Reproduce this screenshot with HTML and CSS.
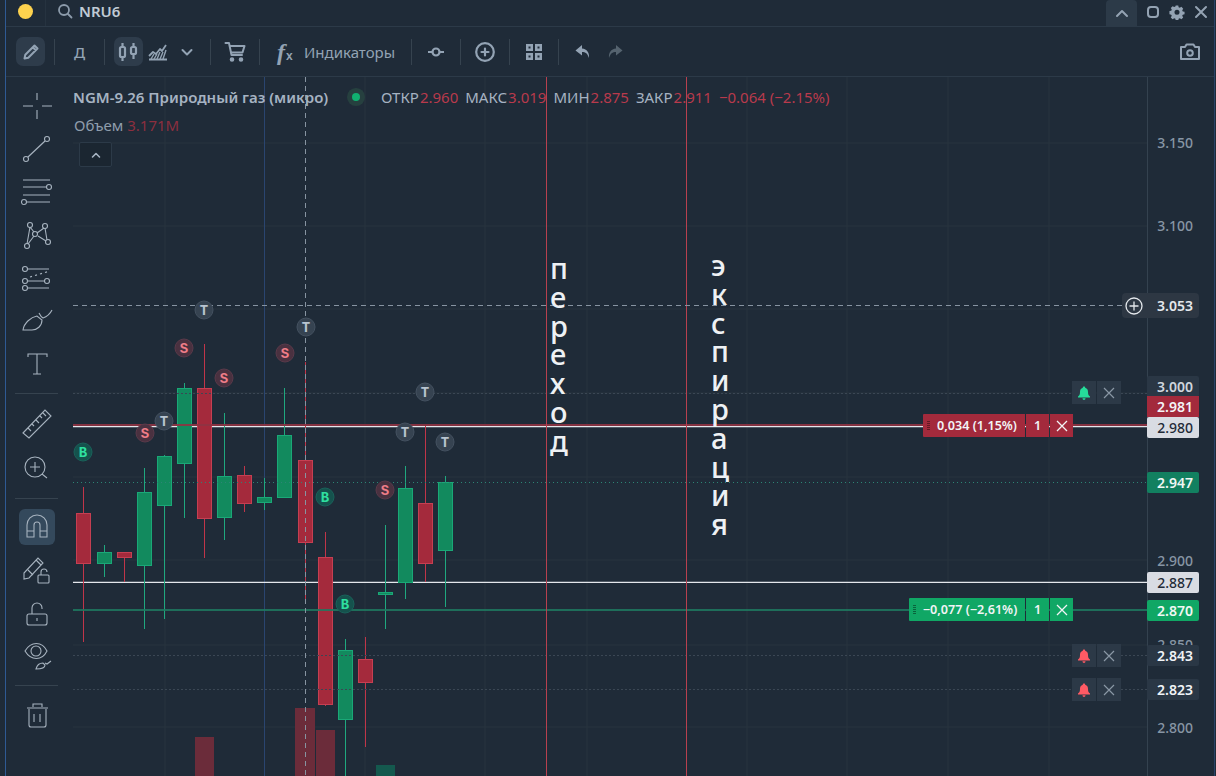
FILE: index.html
```html
<!DOCTYPE html>
<html>
<head>
  <meta charset="utf-8">
  <link rel="stylesheet" href="styles.css">
</head>
<body>
  <div class="window">
    <!-- ticker bar -->
    <div class="topbar">
      <span class="status-dot"></span>
      <span class="topbar-sep"></span>
      <svg class="search-icon" width="16" height="16" viewBox="0 0 16 16" fill="none" stroke="currentColor" stroke-width="1.8" stroke-linecap="round">
        <circle cx="7" cy="7" r="5"/><path d="M11 11l3.5 3.5"/>
      </svg>
      <span class="ticker">NRU6</span>
      <div class="window-actions">
        <button class="collapse-button">
          <svg width="16" height="16" viewBox="0 0 16 16" fill="none" stroke="currentColor" stroke-width="2" stroke-linecap="round" stroke-linejoin="round"><path d="M3 11l5-5 5 5"/></svg>
        </button>
        <svg class="win-icon" width="14" height="14" viewBox="0 0 14 14" fill="none" stroke="currentColor" stroke-width="2"><rect x="2" y="2" width="10" height="10" rx="3"/></svg>
        <svg class="win-icon" width="16" height="16" viewBox="0 0 16 16" fill="currentColor"><path fill-rule="evenodd" d="M6.6 1h2.8l.4 2 1.3.6 1.8-1.1 2 2-1.1 1.8.6 1.3 2 .4v2.8l-2 .4-.6 1.3 1.1 1.8-2 2-1.8-1.1-1.3.6-.4 2H6.6l-.4-2-1.3-.6-1.8 1.1-2-2 1.1-1.8-.6-1.3-2-.4V7.2l2-.4.6-1.3-1.1-1.8 2-2 1.8 1.1 1.3-.6zM8 5.6a2.8 2.8 0 1 0 0 5.600 2.8 2.8 0 0 0 0-5.600z" transform="translate(.8 .6) scale(.9)"/></svg>
        <svg class="win-icon" width="14" height="14" viewBox="0 0 14 14" fill="none" stroke="currentColor" stroke-width="2" stroke-linecap="round"><path d="M2 2l10 10M12 2L2 12"/></svg>
      </div>
    </div>

    <!-- main toolbar -->
    <div class="toolbar">
      <button class="tool active">
        <svg width="20" height="20" viewBox="0 0 20 20" fill="none" stroke="currentColor" stroke-width="2" stroke-linejoin="round"><path d="M3.5 16.500l.8-3.800L13.500 3.500l3 3-9.200 9.200zM11.800 5.200l3 3"/></svg>
      </button>
      <span class="sep"></span>
      <button class="tool day">Д</button>
      <span class="sep"></span>
      <button class="tool active">
        <svg width="24" height="20" viewBox="0 0 24 20" fill="none" stroke="currentColor" stroke-width="2.2"><rect x="3" y="5" width="5" height="10" rx="1.500"/><path d="M5.500 1v4M5.500 15v4"/><rect x="14" y="5" width="5" height="7" rx="1.500"/><path d="M16.500 1v4M16.500 12v5"/></svg>
      </button>
      <button class="tool">
        <svg width="20" height="20" viewBox="0 0 20 20" fill="none" stroke="currentColor" stroke-width="1.8" stroke-linejoin="round"><path d="M1 14l4-4 3 2 4-5 2 2 4-6M1 17.500h18"/><path d="M3 17l3-5M6 17l3-5M9 17l3-7M12 17l3-7M15 17l3-9" stroke-width="1.4"/></svg>
      </button>
      <button class="tool narrow">
        <svg width="14" height="14" viewBox="0 0 14 14" fill="none" stroke="currentColor" stroke-width="2" stroke-linecap="round" stroke-linejoin="round"><path d="M2.500 5L7 9.500 11.500 5"/></svg>
      </button>
      <span class="sep"></span>
      <button class="tool">
        <svg width="22" height="22" viewBox="0 0 22 22" fill="none" stroke="currentColor" stroke-width="2" stroke-linejoin="round" stroke-linecap="round"><path d="M1.500 2H5l2.500 12H18"/><path d="M6 5h14.500l-2 6.500H7.500"/><circle cx="8" cy="18.500" r="1.300" fill="currentColor"/><circle cx="17" cy="18.500" r="1.300" fill="currentColor"/></svg>
      </button>
      <span class="sep"></span>
      <button class="tool indicators">
        <span class="fx"><i>f</i><b>x</b></span>
        Индикаторы
      </button>
      <span class="sep"></span>
      <button class="tool">
        <svg width="20" height="20" viewBox="0 0 20 20" fill="none" stroke="currentColor" stroke-width="2.2"><circle cx="10" cy="10" r="3.500"/><path d="M2 10h4.500M13.500 10H18"/></svg>
      </button>
      <span class="sep"></span>
      <button class="tool">
        <svg width="22" height="22" viewBox="0 0 22 22" fill="none" stroke="currentColor" stroke-width="2.2" stroke-linecap="round"><circle cx="11" cy="11" r="8.800"/><path d="M11 7.500v7M7.500 11h7"/></svg>
      </button>
      <span class="sep"></span>
      <button class="tool">
        <svg width="20" height="20" viewBox="0 0 20 20" fill="currentColor"><path fill-rule="evenodd" d="M2 2h7v7H2zM4.500 4.500v2h2v-2zM11 2h7v7h-7zM13.500 4.500v2h2v-2zM2 11h7v7H2zM4.500 13.500v2h2v-2zM11 11h7v7h-7zM13.500 13.500v2h2v-2z"/></svg>
      </button>
      <span class="sep"></span>
      <button class="tool">
        <svg width="18" height="18" viewBox="0 0 18 18" fill="currentColor"><path d="M8 2L1.500 7.500 8 12.500V9c3.500 0 5.500 1.500 7 6 .5-5.500-2-9-7-9.500z"/></svg>
      </button>
      <button class="tool dim">
        <svg width="18" height="18" viewBox="0 0 18 18" fill="currentColor"><path d="M10 2l6.500 5.500L10 12.500V9c-3.500 0-5.500 1.500-7 6-.5-5.500 2-9 7-9.500z"/></svg>
      </button>
      <button class="tool camera">
        <svg width="22" height="20" viewBox="0 0 22 20" fill="none" stroke="currentColor" stroke-width="2" stroke-linejoin="round"><path d="M2 5h4l1.500-2.500h7L16 5h4v12H2z"/><circle cx="11" cy="11" r="2.800"/></svg>
      </button>
    </div>

    <div class="workspace">
      <!-- drawing tools -->
      <div class="rail">
        <button class="rail-tool">
          <svg viewBox="0 0 32 32"><path d="M16 3v7M16 20v9M2 16h10M21 16h10"/></svg>
        </button>
        <button class="rail-tool">
          <svg viewBox="0 0 32 32"><circle cx="26" cy="6" r="2.500"/><circle cx="5" cy="26" r="2.500"/><path d="M7 24L24 8"/></svg>
        </button>
        <button class="rail-tool">
          <svg viewBox="0 0 32 32"><path d="M2 4h27M2 11h23M2 19h27M6 26h23"/><circle cx="28" cy="11" r="2.500"/><circle cx="3" cy="26" r="2.500"/></svg>
        </button>
        <button class="rail-tool">
          <svg viewBox="0 0 32 32"><path d="M9 8l4 5M9 8L6 25M13 17L7 25M16 14l7-5M17 17l8 5M24 9l2 12"/><circle cx="9" cy="6" r="2.500"/><circle cx="24" cy="7" r="2.500"/><circle cx="14" cy="15" r="2.500"/><circle cx="6" cy="27" r="2.500"/><circle cx="27" cy="23" r="2.500"/></svg>
        </button>
        <button class="rail-tool">
          <svg viewBox="0 0 32 32"><path d="M7 7h21M7 19h17M7 26h21"/><path d="M9 15l2-.6M14 13.500l2-.6M19 12l2-.6M24 10.500l2-.6"/><circle cx="4" cy="7" r="2.500"/><circle cx="4" cy="19" r="2.500"/><circle cx="26" cy="19" r="2.500"/><circle cx="4" cy="26" r="2.500"/></svg>
        </button>
        <button class="rail-tool">
          <svg viewBox="0 0 32 32"><path d="M2 25C3 18 10 12 16 11l5 4c0 6-5 10-10 10zM18 8c1 2 2 4 4 5 3-1 7-4 9-8"/></svg>
        </button>
        <button class="rail-tool">
          <svg viewBox="0 0 32 32"><path d="M7 9V6h19v3M16 6v20M12 26h8"/></svg>
        </button>
        <span class="rail-sep"></span>
        <button class="rail-tool">
          <svg viewBox="0 0 32 32"><path d="M2 25L24 2l6 6L8 30zM7 20l3 3M11 16l2 2M15 12l3 3M19 8l2 2M22 5l3 3"/></svg>
        </button>
        <button class="rail-tool">
          <svg viewBox="0 0 32 32"><circle cx="14" cy="16" r="10"/><path d="M14 11v10M9 16h10M21 23l5 4"/></svg>
        </button>
        <span class="rail-sep low"></span>
        <button class="rail-tool active">
          <svg viewBox="0 0 32 32"><path d="M6 26V14a10 10 0 0 1 20 0v12h-7V14a3 3 0 0 0-6 0v12zM6 20h7M19 20h7"/></svg>
        </button>
        <button class="rail-tool">
          <svg viewBox="0 0 32 32"><path d="M3 19L17 4l5 5L8 24l-5 1zM7 16l5 5M15 6l5 5"/><rect x="17" y="21" width="11" height="8" rx="1"/><path d="M20 21v-3a3 3 0 0 1 6 0"/></svg>
        </button>
        <button class="rail-tool">
          <svg viewBox="0 0 32 32"><rect x="6" y="17" width="20" height="11" rx="2"/><path d="M11 17v-6a5 5 0 0 1 10 0v1M16 21v3"/></svg>
        </button>
        <button class="rail-tool">
          <svg viewBox="0 0 32 32"><path d="M4 11c6-10 17-10 22 0-5 10-16 10-22 0z"/><circle cx="15" cy="11" r="5"/><path d="M15 29c1-4 4-6 7-6l2 2c0 3-4 4-9 4zM24 23l2 1 4-3"/></svg>
        </button>
        <span class="rail-sep"></span>
        <button class="rail-tool">
          <svg viewBox="0 0 32 32"><path d="M6 8h21M12 7V4h9v3M8 9v16a2 2 0 0 0 2 2h13a2 2 0 0 0 2-2V9M13 14v8M19 14v8"/></svg>
        </button>
      </div>

      <!-- chart canvas, svg coordinates are page coordinates -->
      <div class="chart">
        <svg class="plot" width="1141" height="699" viewBox="73 77 1141 699">
          <g class="grid">
            <path d="M165 77v699M365 77v699M485 77v699M587 77v699M747 77v699M847 77v699M948 77v699M1049 77v699"/>
            <path d="M73 143h1074M73 226h1074M73 309h1074M73 393h1074M73 477h1074M73 560h1074M73 645h1074M73 727h1074"/>
          </g>
          <path class="session" d="M264.5 77v699"/>
          <path class="axis-line" d="M1147.5 77v699"/>

          <path class="level-white" d="M73 426.7h1074M73 582.4h1074"/>

          <g class="vol-red">
            <rect x="195" y="737" width="19" height="39"/>
            <rect x="295" y="708" width="20" height="68"/>
            <rect x="316" y="730" width="19" height="46"/>
          </g>
          <rect class="vol-green" x="376" y="765" width="19" height="11"/>

          <g class="wick-red">
            <path d="M83.5 487v155M124.5 558v24M204.5 344v214M244.5 466v46M305.5 362v240M325.5 532v174M365.5 637v110M425.5 426v156"/>
          </g>
          <g class="wick-green">
            <path d="M104.5 545v32M144.5 468v161M164.5 455v164M184.5 383v135M224.5 413v127M264.5 478v32M284.5 388v47M345.5 639v137M385.5 525v104M405.5 466v133M445.5 476v131"/>
          </g>
          <g class="body-red">
            <rect x="76.5" y="513.5" width="14" height="50"/>
            <rect x="117.5" y="552.5" width="14" height="5"/>
            <rect x="197.5" y="388.5" width="14" height="130"/>
            <rect x="237.5" y="475.5" width="14" height="28"/>
            <rect x="298.5" y="460.5" width="14" height="82"/>
            <rect x="318.5" y="557.5" width="14" height="147"/>
            <rect x="358.5" y="659.5" width="14" height="23"/>
            <rect x="418.5" y="503.5" width="14" height="60"/>
          </g>
          <g class="body-green">
            <rect x="97.5" y="552.5" width="14" height="11"/>
            <rect x="137.5" y="492.5" width="14" height="73"/>
            <rect x="157.5" y="456.5" width="14" height="49"/>
            <rect x="177.5" y="388.5" width="14" height="75"/>
            <rect x="217.5" y="476.5" width="14" height="41"/>
            <rect x="257.5" y="497.5" width="14" height="5"/>
            <rect x="277.5" y="435.5" width="14" height="62"/>
            <rect x="338.5" y="650.5" width="14" height="69"/>
            <rect x="378.5" y="592.5" width="14" height="2"/>
            <rect x="398.5" y="488.5" width="14" height="94"/>
            <rect x="438.5" y="482.5" width="14" height="68"/>
          </g>

          <path class="level-red" d="M73 425h1074"/>
          <path class="level-green" d="M73 610h1074"/>
          <path class="dots-gray" d="M73 393.5h1074M73 655.5h1074M73 689.5h1074"/>
          <path class="dots-teal" d="M73 482.5h1074"/>

          <path class="vline-red" d="M546.5 77v699M686.5 77v699"/>
          <path class="cross" d="M73 305.5h1052M305.5 77v699"/>

          <g class="mark mark-t">
            <circle cx="204" cy="310" r="9"/><text x="204" y="314.5">T</text>
            <circle cx="306" cy="327" r="9"/><text x="306" y="331.5">T</text>
            <circle cx="164" cy="421" r="9"/><text x="164" y="425.5">T</text>
            <circle cx="425" cy="392" r="9"/><text x="425" y="396.5">T</text>
            <circle cx="405" cy="432" r="9"/><text x="405" y="436.5">T</text>
            <circle cx="445" cy="442" r="9"/><text x="445" y="446.5">T</text>
          </g>
          <g class="mark mark-s">
            <circle cx="184" cy="348" r="9"/><text x="184" y="352.5">S</text>
            <circle cx="285" cy="353" r="9"/><text x="285" y="357.5">S</text>
            <circle cx="224" cy="378" r="9"/><text x="224" y="382.5">S</text>
            <circle cx="145" cy="433" r="9"/><text x="145" y="437.5">S</text>
            <circle cx="385" cy="490" r="9"/><text x="385" y="494.5">S</text>
          </g>
          <g class="mark mark-b">
            <circle cx="83" cy="452" r="9"/><text x="83" y="456.5">B</text>
            <circle cx="325" cy="497" r="9"/><text x="325" y="501.5">B</text>
            <circle cx="345" cy="604" r="9"/><text x="345" y="608.5">B</text>
          </g>
        </svg>

        <!-- legend -->
        <div class="legend">
          <span class="legend-title">NGM-9.26 Природный газ (микро)</span>
          <span class="legend-dot"></span>
          <span class="ohlc"><em>ОТКР</em><b>2.960</b></span>
          <span class="ohlc"><em>МАКС</em><b>3.019</b></span>
          <span class="ohlc"><em>МИН</em><b>2.875</b></span>
          <span class="ohlc"><em>ЗАКР</em><b>2.911</b></span>
          <span class="ohlc"><b>−0.064 (−2.15%)</b></span>
        </div>
        <div class="volume">Объем <b>3.171M</b></div>
        <button class="legend-toggle">
          <svg width="12" height="12" viewBox="0 0 12 12" fill="none" stroke="currentColor" stroke-width="1.6" stroke-linecap="round" stroke-linejoin="round"><path d="M2.5 8L6 4.5 9.5 8"/></svg>
        </button>

        <div class="note note-a">переход</div>
        <div class="note note-b">экспирация</div>

        <!-- price scale -->
        <span class="price" style="top:55px">3.150</span>
        <span class="price" style="top:138px">3.100</span>
        <span class="price" style="top:473px">2.900</span>
        <span class="price" style="top:557px">2.850</span>
        <span class="price" style="top:640px">2.800</span>
        <span class="price tag tag-dark" style="top:299px">3.000</span>
        <span class="price tag tag-red" style="top:319px">2.981</span>
        <span class="price tag tag-light" style="top:340px">2.980</span>
        <span class="price tag tag-deep" style="top:395px">2.947</span>
        <span class="price tag tag-light" style="top:495px">2.887</span>
        <span class="price tag tag-green" style="top:523px">2.870</span>
        <span class="price tag tag-dark bright" style="top:568px">2.843</span>
        <span class="price tag tag-dark bright" style="top:602px">2.823</span>

        <div class="cursor-price">
          <svg width="18" height="18" viewBox="0 0 18 18" fill="none" stroke="currentColor" stroke-width="1.3"><circle cx="9" cy="9" r="8"/><path d="M9 4.5v9M4.5 9h9"/></svg>
          <span>3.053</span>
        </div>

        <!-- positions -->
        <div class="order order-red" style="top:337px">
          <span class="order-pnl"><i class="grip"></i>0,034 (1,15%)</span>
          <span class="order-qty">1</span>
          <span class="order-close"><svg width="12" height="12" viewBox="0 0 12 12" fill="none" stroke="currentColor" stroke-width="1.3"><path d="M1 1l10 10M11 1L1 11"/></svg></span>
        </div>
        <div class="order order-green" style="top:521px">
          <span class="order-pnl"><i class="grip"></i>−0,077 (−2,61%)</span>
          <span class="order-qty">1</span>
          <span class="order-close"><svg width="12" height="12" viewBox="0 0 12 12" fill="none" stroke="currentColor" stroke-width="1.3"><path d="M1 1l10 10M11 1L1 11"/></svg></span>
        </div>

        <!-- alerts -->
        <div class="alert alert-up" style="top:304px">
          <span class="alert-bell"><svg width="14" height="14" viewBox="0 0 14 14" fill="currentColor"><path d="M7 .5c.8 0 1.200.5 1.200 1.200C10.200 2.300 11 4 11 6c0 2.500.7 3.700 2 4.500v1H1v-1C2.300 9.700 3 8.500 3 6c0-2 .8-3.700 2.800-4.300C5.800 1 6.200.5 7 .5zM5.500 12.300h3C8.500 13.300 7.800 14 7 14s-1.500-.7-1.500-1.700z"/></svg></span>
          <span class="alert-close"><svg width="12" height="12" viewBox="0 0 12 12" fill="none" stroke="currentColor" stroke-width="1.2"><path d="M1 1l10 10M11 1L1 11"/></svg></span>
        </div>
        <div class="alert alert-down" style="top:567px">
          <span class="alert-bell"><svg width="14" height="14" viewBox="0 0 14 14" fill="currentColor"><path d="M7 .5c.8 0 1.200.5 1.200 1.200C10.200 2.300 11 4 11 6c0 2.500.7 3.700 2 4.500v1H1v-1C2.300 9.700 3 8.500 3 6c0-2 .8-3.700 2.800-4.300C5.800 1 6.200.5 7 .5zM5.500 12.300h3C8.500 13.300 7.800 14 7 14s-1.500-.7-1.500-1.700z"/></svg></span>
          <span class="alert-close"><svg width="12" height="12" viewBox="0 0 12 12" fill="none" stroke="currentColor" stroke-width="1.2"><path d="M1 1l10 10M11 1L1 11"/></svg></span>
        </div>
        <div class="alert alert-down" style="top:601px">
          <span class="alert-bell"><svg width="14" height="14" viewBox="0 0 14 14" fill="currentColor"><path d="M7 .5c.8 0 1.200.5 1.200 1.200C10.200 2.300 11 4 11 6c0 2.500.7 3.700 2 4.500v1H1v-1C2.300 9.700 3 8.500 3 6c0-2 .8-3.700 2.800-4.300C5.800 1 6.200.5 7 .5zM5.500 12.300h3C8.500 13.300 7.800 14 7 14s-1.500-.7-1.500-1.700z"/></svg></span>
          <span class="alert-close"><svg width="12" height="12" viewBox="0 0 12 12" fill="none" stroke="currentColor" stroke-width="1.2"><path d="M1 1l10 10M11 1L1 11"/></svg></span>
        </div>
      </div>
    </div>
  </div>
</body>
</html>
```

FILE: styles.css
```css
* {
  box-sizing: border-box;
}

html, body {
  height: 100%;
}

body {
  margin: 0;
  overflow: hidden;
  background: #1f2b38;
  color: #a3b1c0;
  font-family: "Noto Sans", "Open Sans", sans-serif;
  font-size: 15px;
}

button {
  font: inherit;
  color: inherit;
  background: none;
  border: none;
  padding: 0;
}

.window {
  margin-left: 5px;
  width: 1210px;
  height: 776px;
  border-left: 1px solid #2f5a94;
  border-right: 1px solid #2a4468;
  display: flex;
  flex-direction: column;
}

/* ticker bar */
.topbar {
  height: 27px;
  flex: none;
  display: flex;
  align-items: flex-start;
  padding-left: 12px;
  border-bottom: 1px solid #2c3a48;
}

.status-dot {
  width: 15px;
  height: 15px;
  margin-top: 4px;
  border-radius: 50%;
  background: #fdd24e;
}

.topbar-sep {
  width: 1px;
  height: 26px;
  margin: 0 11px 0 12px;
  background: #263340;
}

.search-icon {
  margin-top: 3px;
  color: #8c9bab;
}

.ticker {
  margin-left: 6px;
  line-height: 22px;
  font-weight: 600;
  color: #c0cad5;
}

.window-actions {
  margin-left: auto;
  display: flex;
  align-items: center;
  height: 24px;
  color: #94a3b3;
}

.collapse-button {
  width: 31px;
  height: 26px;
  margin-right: 9px;
  align-self: flex-start;
  background: #2c3a48;
  border-radius: 4px 4px 0 0;
  display: flex;
  align-items: center;
  justify-content: center;
}

.win-icon {
  margin-right: 9px;
}

.win-icon:last-child {
  margin-right: 6px;
}

/* toolbar */
.toolbar {
  height: 50px;
  flex: none;
  display: flex;
  align-items: center;
  padding-left: 10px;
  border-bottom: 1px solid #2c3a48;
  color: #93a3b4;
}

.tool {
  width: 30px;
  height: 29px;
  flex: none;
  display: flex;
  align-items: center;
  justify-content: center;
  border-radius: 7px;
}

.tool.active {
  width: 29px;
  background: #2e3c4b;
}

.tool.narrow {
  width: 28px;
}

.tool.day {
  width: 31px;
  font-weight: 500;
}

.tool.dim {
  width: 34px;
  color: #55636f;
}

.tool.indicators {
  width: 133px;
  gap: 7px;
  justify-content: flex-start;
  padding-left: 8px;
}

.fx {
  width: 20px;
  display: inline-flex;
  align-items: baseline;
  font-family: "Liberation Serif", serif;
  font-size: 24px;
  line-height: 1;
}

.fx i {
  font-weight: 700;
}

.fx b {
  font-family: "Liberation Sans", sans-serif;
  font-size: 12px;
  margin-left: 1px;
}

.tool.camera {
  margin-left: auto;
  margin-right: 9px;
}

.sep {
  width: 1px;
  height: 26px;
  margin: 0 9px;
  flex: none;
  background: #36434f;
}

/* layout below toolbar */
.workspace {
  flex: 1;
  display: flex;
  min-height: 0;
}

.rail {
  width: 67px;
  flex: none;
  display: flex;
  flex-direction: column;
  align-items: center;
  padding: 11px 6px 0 0;
}

.rail-tool {
  width: 36px;
  height: 36px;
  flex: none;
  margin-bottom: 7px;
  display: flex;
  align-items: center;
  justify-content: center;
  border-radius: 6px;
}

.rail-tool svg {
  width: 32px;
  height: 32px;
  fill: none;
  stroke: #a7b3bf;
  stroke-width: 1.1;
}

.rail-tool.active {
  background: #34495c;
}

.rail-sep {
  width: 43px;
  height: 1px;
  flex: none;
  margin: 4px 0 12px;
  background: #36434f;
}

.rail-sep.low {
  margin: 6px 0 10px;
}

/* chart */
.chart {
  position: relative;
  flex: 1;
  overflow: hidden;
}

.plot {
  position: absolute;
  left: 0;
  top: 0;
}

.plot path {
  fill: none;
}

.grid path {
  stroke: #28343f;
}

.session {
  stroke: #2a4570;
}

.axis-line {
  stroke: #34424f;
}

.level-white {
  stroke: #e4e7ec;
  stroke-width: 1.3;
}

.level-red {
  stroke: #8f3343;
  stroke-width: 2;
  stroke-opacity: .9;
}

.level-green {
  stroke: #1f7a60;
  stroke-width: 2;
  stroke-opacity: .85;
}

.vline-red {
  stroke: #b8404f;
}

.cross {
  stroke: #8794a1;
  stroke-dasharray: 5 4;
}

.dots-gray {
  stroke: #3b4754;
  stroke-dasharray: 2 2;
}

.dots-teal {
  stroke: #2c8575;
  stroke-dasharray: 1 3;
}

.vol-red rect {
  fill: #6b2c3a;
}

.vol-green {
  fill: #14594e;
}

.wick-red path {
  stroke: #c03549;
}

.wick-green path {
  stroke: #1fa87f;
}

.body-red rect {
  fill: #a42a3c;
  stroke: #c53f52;
}

.body-green rect {
  fill: #128a5e;
  stroke: #1aa877;
}

.mark text {
  font-family: "Liberation Mono", monospace;
  font-size: 14px;
  font-weight: 700;
  text-anchor: middle;
}

.mark-t circle {
  fill: #364351;
  stroke: #445160;
}

.mark-t text {
  fill: #b8c4d0;
}

.mark-s circle {
  fill: #4a3140;
  stroke: #5a3a4a;
}

.mark-s text {
  fill: #ef7d88;
}

.mark-b circle {
  fill: #15524d;
  stroke: #1a625a;
}

.mark-b text {
  fill: #2fe0a0;
}

/* legend */
.legend {
  position: absolute;
  left: 0;
  top: 10px;
  display: flex;
  align-items: center;
  height: 20px;
  white-space: nowrap;
}

.legend-title {
  font-weight: 600;
  color: #a6b3c2;
  width: 279px;
}

.legend-dot {
  width: 8px;
  height: 8px;
  border-radius: 50%;
  background: #10b070;
  box-shadow: 0 0 0 5px #26403f;
  margin-right: 21px;
}

.ohlc {
  margin-right: 7px;
}

.ohlc em {
  font-style: normal;
  margin-right: 1px;
  color: #a6b3c2;
}

.ohlc b {
  font-weight: 400;
  color: #b83a4c;
}

.volume {
  position: absolute;
  left: 1px;
  top: 38px;
  color: #8f9dac;
}

.volume b {
  font-weight: 400;
  color: #8c2f3f;
}

.legend-toggle {
  position: absolute;
  left: 6px;
  top: 65px;
  width: 33px;
  height: 25px;
  border: 1px solid #2c3a48;
  background: #1b2631;
  border-radius: 2px;
  display: flex;
  align-items: center;
  justify-content: center;
  color: #a6b3c2;
}

.note {
  position: absolute;
  width: 1em;
  font-size: 29px;
  font-weight: 500;
  line-height: 28.8px;
  word-break: break-all;
  color: #eef1f4;
}

.note-a {
  left: 477px;
  top: 177px;
}

.note-b {
  left: 638px;
  top: 174px;
}

/* price scale */
.price {
  position: absolute;
  left: 1074px;
  width: 52px;
  height: 21px;
  line-height: 21px;
  padding-right: 6px;
  text-align: right;
  font-size: 14px;
  font-weight: 500;
  color: #8795a4;
}

.tag {
  font-weight: 600;
}

.tag-dark {
  background: #2a3745;
  border-radius: 2px;
  color: #cfd6de;
}

.tag-dark.bright {
  color: #f0f3f6;
}

.tag-red {
  background: #a32a3c;
  color: #f4f4f6;
}

.tag-light {
  background: #d9dce3;
  color: #1f2b38;
  font-weight: 500;
  border-radius: 2px;
}

.tag-deep {
  background: #128060;
  color: #f0f6f4;
  border-radius: 2px;
}

.tag-green {
  background: #10a765;
  color: #f0f8f4;
  border-radius: 2px;
}

.cursor-price {
  position: absolute;
  left: 1049px;
  top: 216px;
  width: 77px;
  height: 25px;
  display: flex;
  align-items: center;
  justify-content: space-between;
  padding: 0 6px 0 3px;
  border-radius: 4px;
  background: #2d3743;
  color: #e4e8ec;
  font-size: 14px;
  font-weight: 600;
}

/* position labels */
.order {
  position: absolute;
  right: 141px;
  height: 23px;
  display: flex;
  gap: 1px;
  font-size: 12.6px;
  font-weight: 600;
  color: #f2f4f6;
}

.order span {
  display: flex;
  align-items: center;
  justify-content: center;
}

.order-red span {
  background: #a32a3c;
}

.order-green span {
  background: #10a765;
}

.order-pnl {
  position: relative;
  width: 102px;
  padding-left: 6px;
  border-radius: 1px 0 0 1px;
}

.order-green .order-pnl {
  width: 116px;
}

.grip {
  position: absolute;
  left: 4px;
  top: 7px;
  width: 3px;
  height: 9px;
  background: repeating-linear-gradient(#0006 0 1px, transparent 1px 2px);
}

.order-qty {
  width: 23px;
}

.order-close {
  width: 23px;
}

/* alert labels */
.alert {
  position: absolute;
  left: 999px;
  height: 23px;
  display: flex;
  gap: 1px;
}

.alert span {
  width: 24px;
  display: flex;
  align-items: center;
  justify-content: center;
  background: #2c3947;
}

.alert-close {
  color: #8a97a5;
}

.alert-up .alert-bell {
  color: #26dc9a;
}

.alert-down .alert-bell {
  color: #ff5a64;
}
```
